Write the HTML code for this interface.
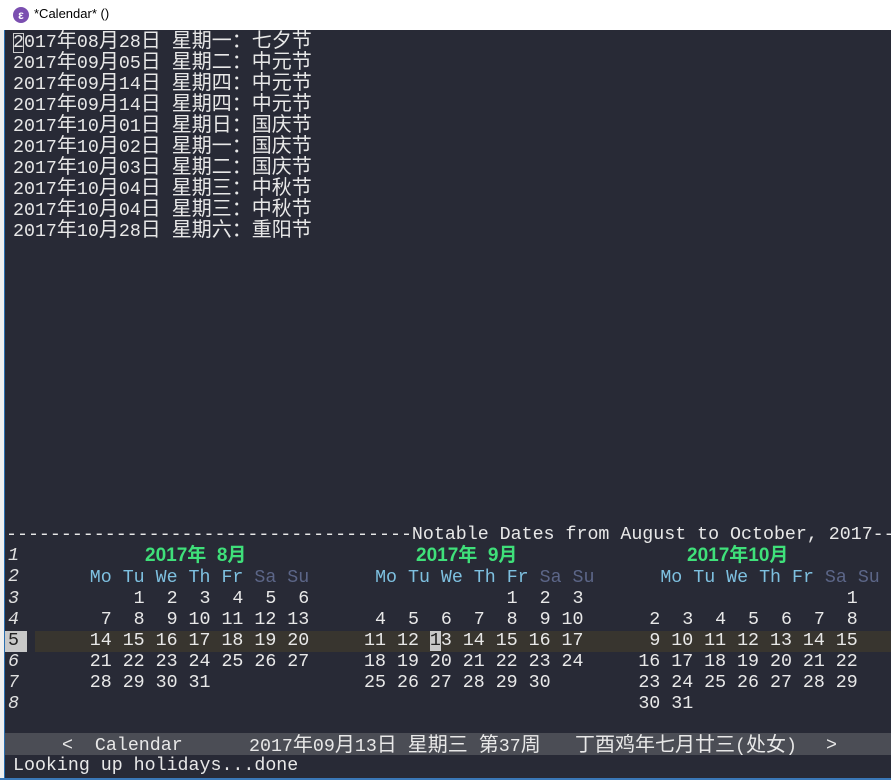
<!DOCTYPE html>
<html><head><meta charset="utf-8"><style>
html,body{margin:0;padding:0}
body{width:891px;height:780px;position:relative;overflow:hidden;background:#282a36;font-family:"Liberation Mono","Noto Sans CJK SC",monospace;font-size:18.3px;color:#e8e8e8}
.l{position:absolute;white-space:pre;line-height:21px;height:21px}
.k{font-family:"Noto Sans CJK SC","WenQuanYi Zen Hei",sans-serif;font-size:20px;line-height:18px}
.hd{color:#7ec0e0}.we{color:#5c6688}
.g{color:#3fe07a;font-weight:bold;font-family:"Liberation Sans","Noto Sans CJK SC",sans-serif;font-size:19px}
.n{position:absolute;left:8px;font-style:italic;line-height:21px;color:#e0e0e0}
</style></head><body>
<div style="position:absolute;left:0;top:0;width:891px;height:30px;background:#fff"></div>
<div style="position:absolute;left:13px;top:7px;width:16px;height:16px;border-radius:50%;background:#7b4fb0;color:#fff;font:bold 12px 'Liberation Sans',sans-serif;text-align:center;line-height:16px">ε</div>
<div style="position:absolute;left:34px;top:6px;font:13px 'Liberation Sans',sans-serif;color:#000">*Calendar* ()</div>
<div style="position:absolute;left:0;top:30px;width:4px;height:750px;background:#f0f0f0"></div>
<div style="position:absolute;left:4px;top:30px;width:1px;height:750px;background:#2a6fb0"></div>

<div class="l" style="left:13px;top:30px"><span style="outline:1px solid #ccc;outline-offset:-1px">2</span>017<span class="k">年</span>08<span class="k">月</span>28<span class="k">日</span> <span class="k">星期一：七夕节</span></div>
<div class="l" style="left:13px;top:51px">2017<span class="k">年</span>09<span class="k">月</span>05<span class="k">日</span> <span class="k">星期二：中元节</span></div>
<div class="l" style="left:13px;top:72px">2017<span class="k">年</span>09<span class="k">月</span>14<span class="k">日</span> <span class="k">星期四：中元节</span></div>
<div class="l" style="left:13px;top:93px">2017<span class="k">年</span>09<span class="k">月</span>14<span class="k">日</span> <span class="k">星期四：中元节</span></div>
<div class="l" style="left:13px;top:114px">2017<span class="k">年</span>10<span class="k">月</span>01<span class="k">日</span> <span class="k">星期日：国庆节</span></div>
<div class="l" style="left:13px;top:135px">2017<span class="k">年</span>10<span class="k">月</span>02<span class="k">日</span> <span class="k">星期一：国庆节</span></div>
<div class="l" style="left:13px;top:156px">2017<span class="k">年</span>10<span class="k">月</span>03<span class="k">日</span> <span class="k">星期二：国庆节</span></div>
<div class="l" style="left:13px;top:177px">2017<span class="k">年</span>10<span class="k">月</span>04<span class="k">日</span> <span class="k">星期三：中秋节</span></div>
<div class="l" style="left:13px;top:198px">2017<span class="k">年</span>10<span class="k">月</span>04<span class="k">日</span> <span class="k">星期三：中秋节</span></div>
<div class="l" style="left:13px;top:219px">2017<span class="k">年</span>10<span class="k">月</span>28<span class="k">日</span> <span class="k">星期六：重阳节</span></div>

<div class="l" style="left:6px;top:525px">-------------------------------------Notable Dates from August to October, 2017-----</div>

<div style="position:absolute;left:35px;top:631px;width:856px;height:21px;background:#38352f"></div>
<div style="position:absolute;left:5px;top:631px;width:22px;height:21px;background:#c8c8c8"></div>

<div class="n" style="top:546px">1</div>
<div class="n" style="top:567px">2</div>
<div class="n" style="top:589px">3</div>
<div class="n" style="top:610px">4</div>
<div class="n" style="top:631px;font-style:normal;color:#222">5</div>
<div class="n" style="top:652px">6</div>
<div class="n" style="top:673px">7</div>
<div class="n" style="top:694px">8</div>

<div class="l g" style="left:145px;top:545px">2017年&nbsp; 8月</div>
<div class="l g" style="left:416px;top:545px">2017年&nbsp; 9月</div>
<div class="l g" style="left:687px;top:545px">2017年10月</div>

<div class="l" style="left:13px;top:568px">       <span class="hd">Mo Tu We Th Fr</span> <span class="we">Sa Su</span>      <span class="hd">Mo Tu We Th Fr</span> <span class="we">Sa Su</span>      <span class="hd">Mo Tu We Th Fr</span> <span class="we">Sa Su</span></div>
<div class="l" style="left:13px;top:589px">           1  2  3  4  5  6                  1  2  3                        1</div>
<div class="l" style="left:13px;top:610px">        7  8  9 10 11 12 13      4  5  6  7  8  9 10      2  3  4  5  6  7  8</div>
<div class="l" style="left:13px;top:631px">       14 15 16 17 18 19 20     11 12 <span style="background:#c8c8c8;color:#222">1</span>3 14 15 16 17      9 10 11 12 13 14 15</div>
<div class="l" style="left:13px;top:652px">       21 22 23 24 25 26 27     18 19 20 21 22 23 24     16 17 18 19 20 21 22</div>
<div class="l" style="left:13px;top:673px">       28 29 30 31              25 26 27 28 29 30        23 24 25 26 27 28 29</div>
<div class="l" style="left:13px;top:694px">                                                         30 31</div>

<div style="position:absolute;left:5px;top:733px;width:886px;height:22px;background:#4b4d55"></div>
<div class="l" style="left:62px;top:736px">&lt;  Calendar</div>
<div class="l" style="left:249px;top:734px">2017<span class="k">年</span>09<span class="k">月</span>13<span class="k">日</span> <span class="k">星期三</span> <span class="k">第</span>37<span class="k">周</span></div>
<div class="l" style="left:575px;top:734px"><span class="k">丁酉鸡年七月廿三</span>(<span class="k">处女</span>)</div>
<div class="l" style="left:826px;top:736px">&gt;</div>

<div class="l" style="left:13px;top:756px">Looking up holidays...done</div>
<div style="position:absolute;left:0;top:778px;width:891px;height:2px;background:#3a78b8"></div>
</body></html>
